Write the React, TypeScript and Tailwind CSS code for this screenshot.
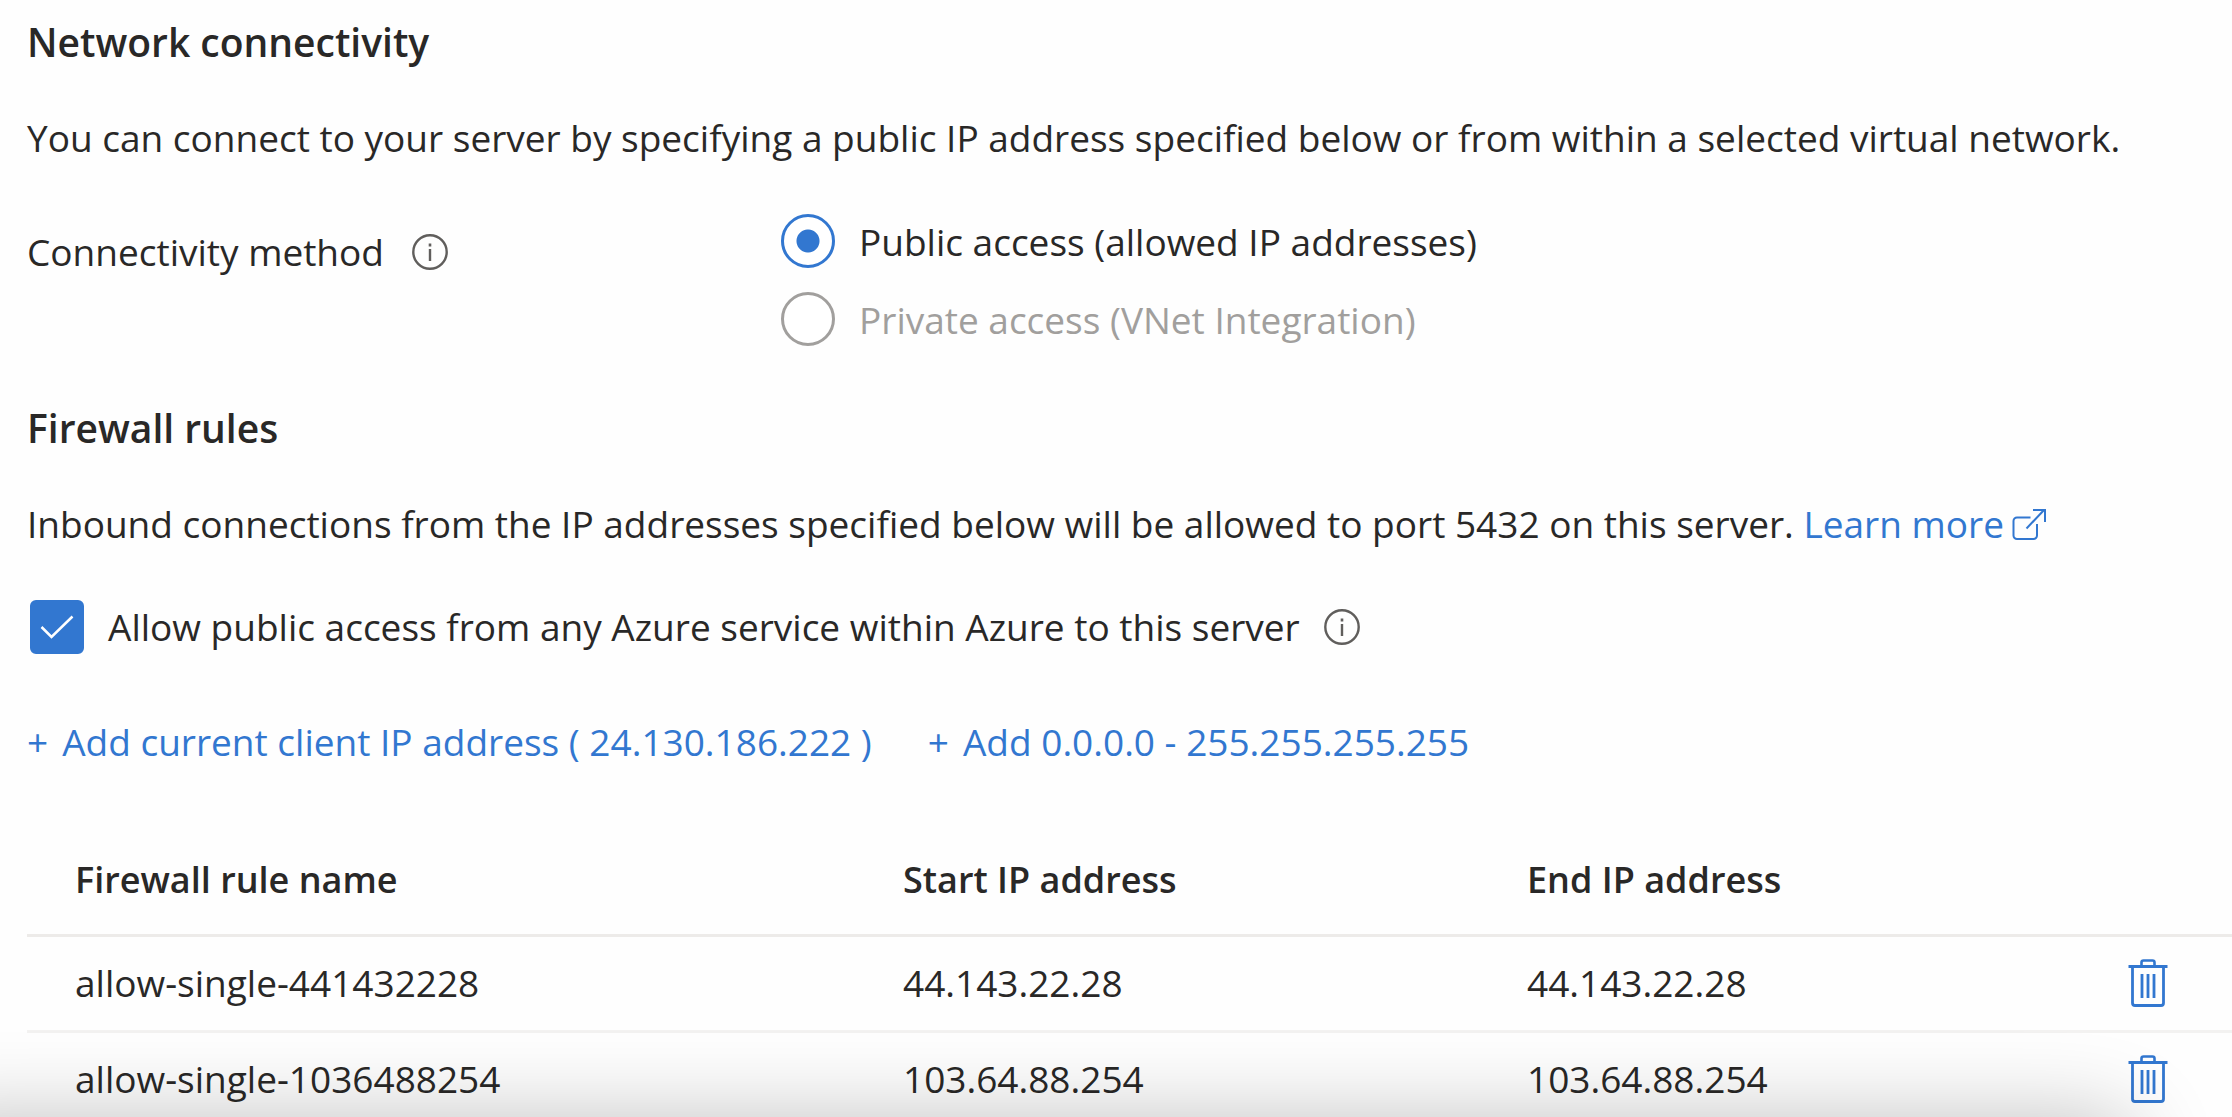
import React, { useState } from "react";

const rules = [
  { name: "allow-single-441432228", start: "44.143.22.28", end: "44.143.22.28" },
  { name: "allow-single-1036488254", start: "103.64.88.254", end: "103.64.88.254" },
];

function InfoIcon() {
  return (
    <svg viewBox="0 0 36 36" className="size-9" fill="none" aria-hidden="true">
      <circle cx="18" cy="18" r="16.7" stroke="#605e5c" strokeWidth="2.4" />
      <rect x="16.7" y="9.5" width="2.6" height="3" fill="#605e5c" />
      <rect x="16.8" y="15" width="2.4" height="12" fill="#605e5c" />
    </svg>
  );
}

function ExternalLinkIcon() {
  return (
    <svg viewBox="0 0 34 32" className="h-8 w-[34px]" fill="none" stroke="currentColor" strokeWidth="2" aria-hidden="true">
      <path d="M18.5 9.5H5A3.5 3.5 0 0 0 1.500 13v14.500A3.500 3.500 0 0 0 5 31h16.500a3.500 3.500 0 0 0 3.500-3.500V16" />
      <path d="M14.500 20.500 32 2" />
      <path d="M21 2h12v12" />
    </svg>
  );
}

function TrashIcon() {
  return (
    <svg viewBox="0 0 40 48" className="h-12 w-10" fill="none" stroke="currentColor" aria-hidden="true">
      <path d="M0.500 7.500h39" strokeWidth="3" />
      <path d="M13.500 7V3.500a2 2 0 0 1 2-2h9a2 2 0 0 1 2 2V7" strokeWidth="2.600" />
      <path d="M4.500 8v36a2.500 2.500 0 0 0 2.500 2.500h26a2.500 2.500 0 0 0 2.500-2.500V8" strokeWidth="2.800" />
      <path d="M14 15v24M20 15v24M26 15v24" strokeWidth="2.800" />
    </svg>
  );
}

export default function App() {
  const [method, setMethod] = useState("public");
  const [allowAzure, setAllowAzure] = useState(true);

  return (
    <main className="relative h-screen overflow-hidden bg-[#fefefe] pl-[27px] font-['Open_Sans','Segoe_UI',sans-serif] text-[37px] leading-[52px] text-[#292827]">
      <section>
        <h1 className="pt-4 text-[39px] font-semibold">Network connectivity</h1>
        <p className="mt-11">
          You can connect to your server by specifying a public IP address specified below or from within a selected
          virtual network.
        </p>
        <div role="radiogroup" aria-labelledby="method-label" className="mt-[50px] flex items-start">
          <div className="flex w-[754px] items-center gap-7 pt-3">
            <span id="method-label">Connectivity method</span>
            <button type="button" aria-label="About connectivity method">
              <InfoIcon />
            </button>
          </div>
          <div className="flex flex-col gap-6">
            <label className="flex items-end gap-6">
              <input
                type="radio"
                name="method"
                value="public"
                checked={method === "public"}
                onChange={() => setMethod("public")}
                className="size-[54px] appearance-none rounded-full border-3 border-[#a19f9d] bg-white checked:border-[#3277d0] checked:bg-[radial-gradient(circle,#3277d0_11px,transparent_12px)]"
              />
              <span>Public access (allowed IP addresses)</span>
            </label>
            <label className="flex items-end gap-6 text-[#a19f9d]">
              <input
                type="radio"
                name="method"
                value="private"
                disabled
                checked={method === "private"}
                onChange={() => setMethod("private")}
                className="size-[54px] appearance-none rounded-full border-3 border-[#a19f9d] bg-white"
              />
              <span>Private access (VNet Integration)</span>
            </label>
          </div>
        </div>
      </section>

      <section>
        <h2 className="mt-14 text-[39px] font-semibold">Firewall rules</h2>
        <p className="mt-11">
          Inbound connections from the IP addresses specified below will be allowed to port 5432 on this server.{" "}
          <a href="#learn-more" className="inline-flex items-center gap-2 text-[#3277d0]">
            Learn more
            <ExternalLinkIcon />
          </a>
        </p>
        <div className="mt-[50px] flex items-center gap-6">
          <label className="flex items-center gap-6">
            <span className="ml-[3px] grid size-[54px] place-items-center">
              <input
                type="checkbox"
                checked={allowAzure}
                onChange={(e) => setAllowAzure(e.target.checked)}
                className="col-start-1 row-start-1 size-[54px] appearance-none rounded-md border-3 border-[#605e5c] checked:border-[#3277d0] checked:bg-[#3277d0]"
              />
              {allowAzure && (
                <svg viewBox="0 0 34 24" className="pointer-events-none col-start-1 row-start-1 h-6 w-[34px]" fill="none" aria-hidden="true">
                  <path d="M1.500 12 11.500 22 32.500 1.500" stroke="#fff" strokeWidth="2.500" />
                </svg>
              )}
            </span>
            <span>Allow public access from any Azure service within Azure to this server</span>
          </label>
          <button type="button" aria-label="About public access from Azure services">
            <InfoIcon />
          </button>
        </div>
        <div className="mt-[62px] flex gap-14 text-[#3277d0]">
          <button type="button" className="flex gap-[14px]">
            <span>+</span>
            <span>Add current client IP address ( 24.130.186.222 )</span>
          </button>
          <button type="button" className="flex gap-[14px]">
            <span>+</span>
            <span>Add 0.0.0.0 - 255.255.255.255</span>
          </button>
        </div>
        <table className="mt-[59px] w-full table-fixed border-collapse text-left">
          <colgroup>
            <col className="w-[828px]" />
            <col className="w-[624px]" />
            <col />
            <col className="w-[144px]" />
          </colgroup>
          <thead>
            <tr className="h-[108px] border-b-3 border-[#edebe9] text-[36px]">
              <th scope="col" className="pl-12 font-semibold">Firewall rule name</th>
              <th scope="col" className="pl-12 font-semibold">Start IP address</th>
              <th scope="col" className="pl-12 font-semibold">End IP address</th>
              <th scope="col" aria-label="Actions" />
            </tr>
          </thead>
          <tbody>
            {rules.map((rule) => (
              <tr key={rule.name} className="h-24 border-b-3 border-[#f3f2f1]">
                <td className="pl-12">{rule.name}</td>
                <td className="pl-12">{rule.start}</td>
                <td className="pl-12">{rule.end}</td>
                <td>
                  <button type="button" aria-label={`Delete ${rule.name}`} className="ml-10 block text-[#3277d0]">
                    <TrashIcon />
                  </button>
                </td>
              </tr>
            ))}
          </tbody>
        </table>
      </section>

      {/* Soft shadow cast upward by the bar below the viewport */}
      <div className="pointer-events-none absolute top-full right-[100px] -left-20 h-40 rounded-3xl shadow-[0_0_85px_rgba(0,0,0,0.24)]" />
    </main>
  );
}
